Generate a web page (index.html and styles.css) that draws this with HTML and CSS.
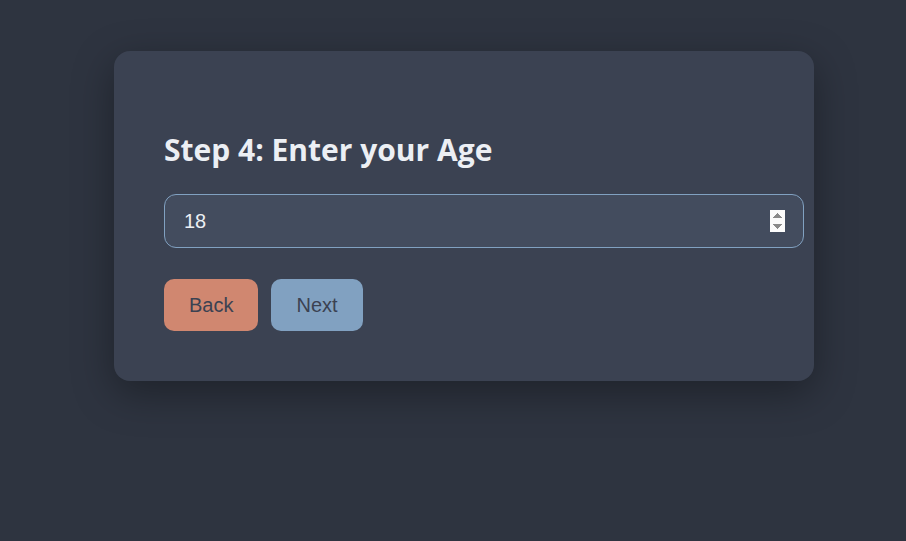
FILE: index.html
```html
<!DOCTYPE html>
<html lang="en">
<head>
<meta charset="utf-8">
<title>Step 4</title>
<link rel="stylesheet" href="styles.css">
</head>
<body>
  <div class="card">
    <h2 class="title">Step 4: Enter your Age</h2>
    <input class="age-input" type="number" value="18" autofocus>
    <div class="actions">
      <button class="btn btn-back">Back</button>
      <button class="btn btn-next">Next</button>
    </div>
  </div>
</body>
</html>
```
FILE: styles.css
```css
html, body {
  margin: 0;
  height: 100%;
}
body {
  background: #2e3440;
  padding: 51px 0 0 114px;
  box-sizing: border-box;
  font-family: "Liberation Sans", Arial, sans-serif;
}
.card {
  width: 700px;
  height: 330px;
  box-sizing: border-box;
  background: #3b4252;
  border-radius: 16px;
  padding: 83px 50px 50px;
  box-shadow: 0 12px 40px rgba(0, 0, 0, 0.35);
}
.title {
  margin: 0 0 28px;
  font-family: "Open Sans", "Noto Sans", sans-serif;
  font-weight: 700;
  font-size: 30px;
  line-height: 32px;
  color: #eceff4;
}
.age-input {
  display: block;
  width: 640px;
  height: 54px;
  box-sizing: border-box;
  padding: 0 18px 0 19px;
  background: #434c5e;
  border: 1px solid #81a1c1;
  border-radius: 12px;
  color: #eceff4;
  font-family: "Liberation Sans", Arial, sans-serif;
  font-size: 20px;
  outline: none;
  caret-color: #eceff4;
}
.actions {
  display: flex;
  gap: 13px;
  margin-top: 31px;
}
.btn {
  height: 52px;
  padding: 0 25px;
  border: none;
  border-radius: 10px;
  font-family: "Liberation Sans", Arial, sans-serif;
  font-size: 20px;
  color: #3b4252;
  cursor: pointer;
}
.btn-back {
  background: #d08770;
}
.btn-next {
  background: #81a1c1;
}
```
